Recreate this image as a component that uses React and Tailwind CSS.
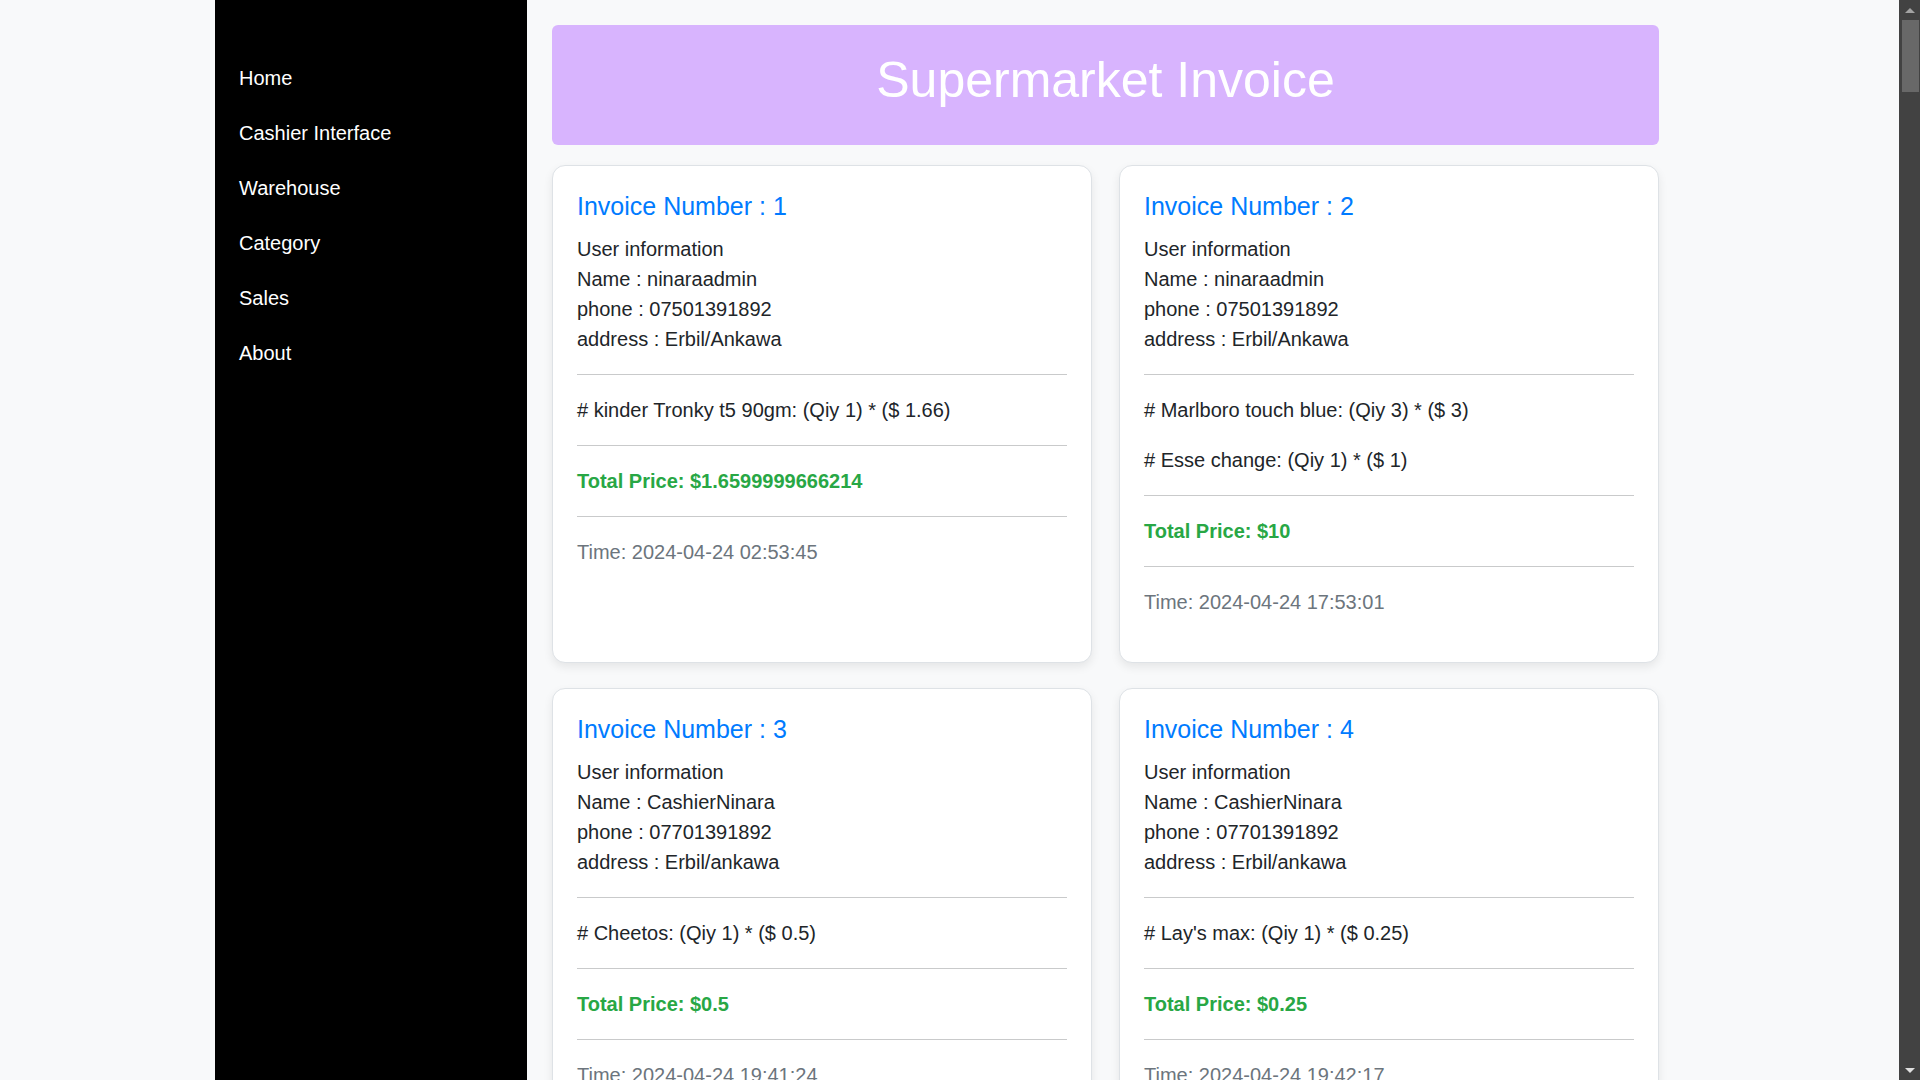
import React from 'react';

const navLinks = ['Home', 'Cashier Interface', 'Warehouse', 'Category', 'Sales', 'About'];

const invoices = [
  {
    id: 1,
    name: 'ninaraadmin',
    phone: '07501391892',
    address: 'Erbil/Ankawa',
    items: ['# kinder Tronky t5 90gm: (Qiy 1) * ($ 1.66)'],
    total: '$1.6599999666214',
    time: '2024-04-24 02:53:45',
  },
  {
    id: 2,
    name: 'ninaraadmin',
    phone: '07501391892',
    address: 'Erbil/Ankawa',
    items: ['# Marlboro touch blue: (Qiy 3) * ($ 3)', '# Esse change: (Qiy 1) * ($ 1)'],
    total: '$10',
    time: '2024-04-24 17:53:01',
  },
  {
    id: 3,
    name: 'CashierNinara',
    phone: '07701391892',
    address: 'Erbil/ankawa',
    items: ['# Cheetos: (Qiy 1) * ($ 0.5)'],
    total: '$0.5',
    time: '2024-04-24 19:41:24',
  },
  {
    id: 4,
    name: 'CashierNinara',
    phone: '07701391892',
    address: 'Erbil/ankawa',
    items: ["# Lay's max: (Qiy 1) * ($ 0.25)"],
    total: '$0.25',
    time: '2024-04-24 19:42:17',
  },
];

const InvoiceCard = ({ invoice }) => (
  <div className="bg-white border border-[#dee2e6] rounded-[13px] shadow-[0_4px_10px_rgba(0,0,0,0.08)] px-6 pt-[25px] pb-6">
    <h3 className="text-[25px] leading-[30px] text-[#007bff] mb-[13px]">
      Invoice Number : {invoice.id}
    </h3>
    <div className="text-[20px] leading-[30px] text-[#212529]">
      <p>User information</p>
      <p>Name : {invoice.name}</p>
      <p>phone : {invoice.phone}</p>
      <p>address : {invoice.address}</p>
    </div>
    <hr className="my-5 border-t border-[#c9cacb]" />
    <div className="flex flex-col gap-5 text-[20px] leading-[30px] text-[#212529]">
      {invoice.items.map((item, i) => (
        <p key={i}>{item}</p>
      ))}
    </div>
    <hr className="my-5 border-t border-[#c9cacb]" />
    <p className="text-[20px] leading-[30px] font-bold text-[#28a745]">
      Total Price: {invoice.total}
    </p>
    <hr className="my-5 border-t border-[#c9cacb]" />
    <p className="text-[20px] leading-[30px] text-[#6c757d] mb-[21px]">Time: {invoice.time}</p>
  </div>
);

// dark classic scrollbar seen at the right edge of the screenshot
const Scrollbar = () => (
  <div className="w-[21px] shrink-0 bg-[#424242] flex flex-col items-center">
    <div className="h-[20px] flex items-center justify-center">
      <div className="w-0 h-0 border-l-[5px] border-r-[5px] border-b-[5px] border-l-transparent border-r-transparent border-b-[#a3a3a3]" />
    </div>
    <div className="w-[17px] h-[72px] bg-[#686868] ml-[3px] self-start" />
    <div className="flex-1" />
    <div className="h-[20px] flex items-center justify-center">
      <div className="w-0 h-0 border-l-[5px] border-r-[5px] border-t-[5px] border-l-transparent border-r-transparent border-t-[#e0e0e0]" />
    </div>
  </div>
);

const App = () => {
  return (
    <div
      className="flex h-screen overflow-hidden bg-[#f8f9fa]"
      style={{ fontFamily: '"Liberation Sans", Arial, sans-serif' }}
    >
      <div className="flex-1 overflow-hidden">
        <div className="flex pl-[215px] min-h-full">
          {/* Sidebar */}
          <aside className="w-[312px] shrink-0 bg-black pt-[51px] min-h-screen">
            <ul>
              {navLinks.map((link) => (
                <li key={link}>
                  <a href="#" className="block px-6 py-4 text-[20px] leading-[23px] text-white">
                    {link}
                  </a>
                </li>
              ))}
            </ul>
          </aside>

          {/* Main content */}
          <main className="w-[1157px] px-[25px] pt-[25px] pb-[25px]">
            <div className="bg-[#d8b4fe] rounded-md h-[120px] pt-[25px] mb-5">
              <h1 className="text-center text-white text-[50px] leading-[60px]">Supermarket Invoice</h1>
            </div>

            <div className="grid grid-cols-2 gap-x-[27px] gap-y-[25px]">
              {invoices.map((invoice) => (
                <InvoiceCard key={invoice.id} invoice={invoice} />
              ))}
            </div>
          </main>
        </div>
      </div>
      <Scrollbar />
    </div>
  );
};

export default App;
